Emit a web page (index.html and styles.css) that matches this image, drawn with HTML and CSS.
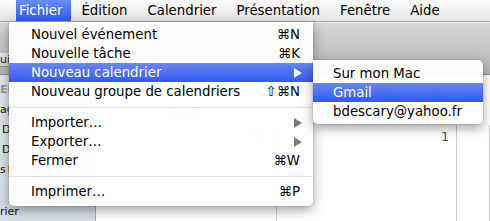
FILE: index.html
```html
<!DOCTYPE html>
<html lang="fr">
<head>
<meta charset="utf-8">
<title>iCal – Fichier</title>
<link rel="stylesheet" href="styles.css">
</head>
<body>
<div class="screen">
  <div class="menubar">
    <span class="mb-item active">Fichier</span>
    <span class="mb-item">Édition</span>
    <span class="mb-item">Calendrier</span>
    <span class="mb-item">Présentation</span>
    <span class="mb-item">Fenêtre</span>
    <span class="mb-item">Aide</span>
  </div>
  <div class="window">
    <div class="toolbar"><span class="tb-btn">ui</span></div>
    <div class="content">
      <aside class="sidebar">
        <div class="sb-row sb-head">ER</div>
        <div class="sb-row">ag</div>
        <div class="sb-row indent">D</div>
        <div class="sb-row indent">D</div>
        <div class="sb-row">s<span class="swatch"></span></div>
        <div class="sb-row last">rier</div>
      </aside>
      <div class="cal">
        <div class="cal-head"><span>lundi</span><span></span><span></span></div>
        <div class="cal-grid">
          <div class="cell"><span class="num prev">31</span></div>
          <div class="cell"><span class="num">1</span></div>
          <div class="cell"></div>
        </div>
      </div>
    </div>
  </div>

  <div class="menu">
    <div class="mi"><span>Nouvel événement</span><span class="key">⌘N</span></div>
    <div class="mi"><span>Nouvelle tâche</span><span class="key">⌘K</span></div>
    <div class="mi sel"><span>Nouveau calendrier</span><svg class="arrow" width="8" height="10" viewBox="0 0 8 10"><polygon points="0,0 8,5 0,10"/></svg></div>
    <div class="mi"><span>Nouveau groupe de calendriers</span><span class="key">⇧⌘N</span></div>
    <div class="sep"></div>
    <div class="mi"><span>Importer…</span><svg class="arrow" width="8" height="10" viewBox="0 0 8 10"><polygon points="0,0 8,5 0,10"/></svg></div>
    <div class="mi"><span>Exporter…</span><svg class="arrow" width="8" height="10" viewBox="0 0 8 10"><polygon points="0,0 8,5 0,10"/></svg></div>
    <div class="mi"><span>Fermer</span><span class="key">⌘W</span></div>
    <div class="sep"></div>
    <div class="mi"><span>Imprimer…</span><span class="key">⌘P</span></div>
  </div>

  <div class="submenu">
    <div class="mi"><span>Sur mon Mac</span></div>
    <div class="mi sel"><span>Gmail</span></div>
    <div class="mi"><span>bdescary@yahoo.fr</span></div>
  </div>
</div>
</body>
</html>
```
FILE: styles.css
```css
html, body {
  margin: 0;
  padding: 0;
}
body {
  width: 490px;
  height: 221px;
  overflow: hidden;
  font-family: "DejaVu Sans", "Liberation Sans", sans-serif;
  background: #fff;
}
.screen {
  position: relative;
  width: 490px;
  height: 221px;
  overflow: hidden;
}

/* menu bar */
.menubar {
  height: 21px;
  border-bottom: 1px solid #a9a9a9;
  background: linear-gradient(#fbfbfb, #e4e4e4);
  display: flex;
  padding-left: 16px;
  font-size: 13.3px;
  line-height: 21px;
  color: #000;
  white-space: nowrap;
}
.mb-item {
  padding: 0 10px;
}
.mb-item.active {
  padding: 0 9px 0 3px;
  color: #fff;
  background: linear-gradient(#6a8bf6, #3057f0);
}

/* window */
.window {
  display: flex;
  flex-direction: column;
  height: 199px;
}
.toolbar {
  box-sizing: border-box;
  height: 53px;
  border-bottom: 1px solid #8f8f8f;
  background: linear-gradient(#d6d6d6, #b6b6b6);
  box-shadow: inset 0 1px 0 #ededed;
  padding-top: 31px;
  display: flex;
  align-items: flex-start;
}
.tb-btn {
  height: 13px;
  line-height: 13px;
  font-size: 11px;
  color: #222;
  padding-right: 2px;
  background: linear-gradient(#efefef, #d2d2d2);
  border-bottom: 1px solid #9a9a9a;
}
.content {
  flex: 1;
  display: flex;
  min-height: 0;
}
.sidebar {
  width: 95px;
  flex: none;
  border-right: 1px solid #a9adb2;
  background: linear-gradient(#e3e8ee, #d7dee6);
  padding-top: 4px;
  font-size: 11px;
  color: #111;
}
.sb-row {
  height: 20px;
  display: flex;
  align-items: center;
  white-space: nowrap;
}
.sb-head {
  color: #8f9aa6;
  font-weight: bold;
}
.sb-row.indent {
  padding-left: 2px;
}
.swatch {
  width: 9px;
  height: 9px;
  margin: 0 4px 0 2px;
  background: #e0902a;
  border-radius: 2px;
}
.sb-row.last {
  margin-top: 22px;
}

.cal {
  flex: 1;
  display: flex;
  flex-direction: column;
}
.cal-head {
  box-sizing: border-box;
  height: 50px;
  display: grid;
  grid-template-columns: 181px 180px 1fr;
  align-items: end;
  padding-bottom: 4px;
  font-size: 10px;
  color: #333;
  text-align: center;
  white-space: nowrap;
}
.cal-grid {
  flex: 1;
  display: grid;
  grid-template-columns: 181px 180px 1fr;
}
.cell {
  box-sizing: border-box;
  border-right: 1px solid #cacaca;
  display: flex;
  justify-content: flex-end;
  align-items: flex-start;
  padding: 5px 7px 0 0;
}
.num {
  font-size: 12px;
  line-height: 14px;
  color: #4a4a4a;
}
.num.prev {
  color: #999;
  margin-right: 2px;
}

/* menus */
.menu, .submenu {
  position: absolute;
  background: rgba(255, 255, 255, 0.96);
  box-shadow: 0 4px 12px rgba(0, 0, 0, 0.38), 0 0 0 1px rgba(0, 0, 0, 0.06);
  font-size: 13.3px;
  color: #000;
}
.menu {
  left: 9px;
  top: 22px;
  width: 304px;
  padding: 3px 0 5px;
  border-radius: 0 0 5px 5px;
}
.submenu {
  left: 313px;
  top: 60px;
  width: 170px;
  padding: 4px 0 3px;
  border-radius: 0 5px 5px 5px;
}
.mi {
  height: 19px;
  line-height: 19px;
  display: flex;
  justify-content: space-between;
  align-items: center;
  padding: 0 13px 0 22px;
  white-space: nowrap;
}
.submenu .mi {
  padding: 0 10px 0 20px;
}
.mi.sel {
  color: #fff;
  background: linear-gradient(#6787f6, #3459f0);
}
.arrow {
  fill: #7a7a7a;
  margin-right: -2px;
}
.mi.sel .arrow {
  fill: #fff;
}
.sep {
  height: 12px;
  display: flex;
  align-items: center;
}
.sep::before {
  content: "";
  flex: 1;
  height: 1px;
  background: #e0e0e0;
}
```
